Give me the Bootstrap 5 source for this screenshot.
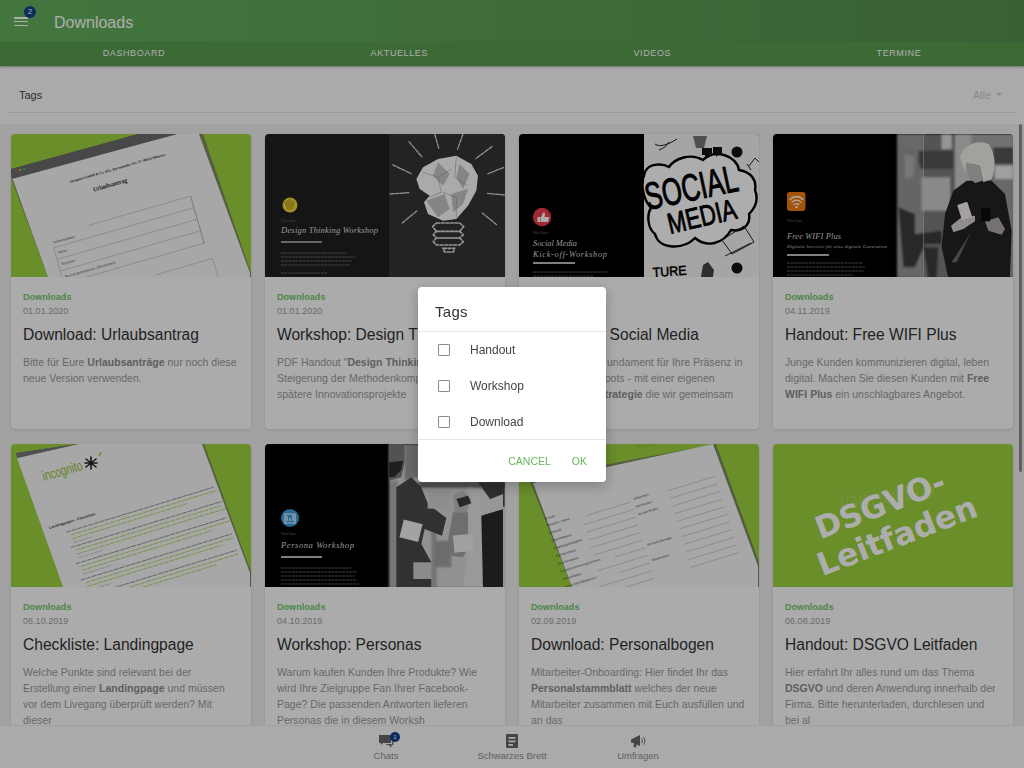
<!DOCTYPE html>
<html lang="de">
<head>
<meta charset="utf-8">
<title>Downloads</title>
<link href="https://cdn.jsdelivr.net/npm/bootstrap@5.3.0/dist/css/bootstrap.min.css" rel="stylesheet">
<style>
html,body{height:100%;overflow:hidden}
body{font-family:"Liberation Sans",Arial,sans-serif;background:#efefef;color:#333}
.app-shell{height:768px}
.top-head{background:linear-gradient(90deg,#63b05c,#568f4e);height:42px;padding:0 0 0 14px}
.head-title{font-size:16px;color:#fff;margin-left:18px;line-height:45px}
.menu-btn{width:22px;height:42px;position:relative;padding-top:17px}
.menu-btn i{display:block;height:1.5px;width:14px;background:#fff;margin-bottom:2.4px}
.menu-count{position:absolute;left:10px;top:6px;width:12px;height:12px;border-radius:50%;background:#12408d;color:#fff;font-size:8px;line-height:12px;padding:0;font-weight:400}
.tab-strip{background:#579c4f;height:24px;box-shadow:0 1px 2px rgba(0,0,0,.35);position:relative;z-index:2}
.tab-strip .nav-link{color:#fff;font-size:9px;letter-spacing:.6px;text-transform:uppercase;line-height:22px;padding:0;height:24px}
.filter-strip{height:58px;background:#fbfbfb;padding:0 8px}
.filter-inner{height:47px;border-bottom:1px solid #e2e2e2;padding:12px 11px 0;font-size:11px}
.filter-name{color:#444}
.filter-all{color:#cbcbcb;padding:0 3px 0 0;font-size:11px;border:0;background:none;--bs-btn-color:#cbcbcb}
.filter-all.dropdown-toggle::after{margin-left:5px;vertical-align:3px;border-top-width:3.5px;border-left-width:3.5px;border-right-width:3.5px}
.card-scroll{flex:1 1 auto;min-height:0;overflow:hidden;padding:10px 11px 0;display:grid;grid-template-columns:repeat(4,240px);column-gap:14px;row-gap:15px;grid-auto-rows:295px}
.doc-card{border:0;border-radius:4px;overflow:hidden;background:#fcfcfc;box-shadow:0 1px 3px rgba(0,0,0,.12);height:295px}
.doc-card svg{display:block;width:240px;height:143px;flex:none}
.doc-body{padding:14px 12px 0}
.doc-cat{font-size:9px;line-height:12px;font-weight:700;color:#70c769;letter-spacing:.05px}
.doc-date{font-size:9px;line-height:12px;margin-top:2px;color:#9c9c9c;letter-spacing:.03px}
.doc-title{font-size:15.6px;line-height:20px;margin:8px 0 9px;color:#333;font-weight:400;white-space:nowrap}
.doc-text{font-size:10.5px;line-height:16px;color:#999;margin:0;letter-spacing:.01px}
.doc-text b{font-weight:700;color:#8c8c8c}
.bottom-bar{height:43px;background:#fbfbfb;border-top:1px solid #ececec;position:relative;z-index:2}
.bottom-item{width:126px;color:#8e8e8e;font-size:9.5px;line-height:11px;position:relative;padding-top:8px;text-align:center}
.bottom-item svg{display:block;margin:0 auto 2px;width:16px;height:14px}
.chat-count{position:absolute;left:67px;top:6px;width:10px;height:10px;border-radius:50%;background:#12408d;color:#fff;font-size:6px;line-height:10px;padding:0;font-weight:400}
.side-thumb{position:absolute;right:2px;top:124px;width:3px;height:348px;background:#8d8d8d;border-radius:2px;z-index:3}
.modal-backdrop{--bs-backdrop-opacity:.32}
.tags-dialog{--bs-modal-width:188px;max-width:188px;margin:0 auto;min-height:768px}
.tags-dialog .modal-content{border:0;border-radius:4px;box-shadow:0 4px 14px rgba(0,0,0,.25);height:195px}
.tags-dialog .modal-header{height:45px;padding:7px 17px 0;border-bottom:1px solid #e6e6e6;border-radius:0}
.tags-dialog .modal-title{font-size:15px;font-weight:400;color:#333;letter-spacing:.02em}
.tags-dialog .modal-body{padding:0;height:107px;flex:none}
.tag-row{height:36px;padding-left:20px;margin:0;font-size:12px;color:#444;gap:20px}
.tags-dialog .tag-row .form-check-input{width:12px;height:12px;margin:0;border:1.5px solid #8a8a8a;border-radius:1px;float:none;flex:none}
.tags-dialog .modal-footer{height:43px;padding:2px 19px 0 0;border-top:1px solid #e6e6e6;gap:21px;flex-wrap:nowrap;border-radius:0}
.tags-dialog .modal-footer>*{margin:0}
.tag-action{font-size:10.5px;color:#63b95d;padding:0;border:0;background:none;--bs-btn-color:#63b95d}
.ser{font-family:"Liberation Serif",serif}
</style>
</head>
<body>
<div class="app-shell d-flex flex-column">
  <header class="flex-shrink-0">
    <div class="top-head d-flex align-items-start">
      <div class="menu-btn"><i></i><i></i><i></i><span class="badge menu-count">2</span></div>
      <div class="head-title">Downloads</div>
    </div>
    <nav class="nav nav-fill tab-strip">
      <a class="nav-link" href="#">Dashboard</a>
      <a class="nav-link" href="#">Aktuelles</a>
      <a class="nav-link" href="#">Videos</a>
      <a class="nav-link" href="#">Termine</a>
    </nav>
  </header>

  <div class="filter-strip flex-shrink-0">
    <div class="filter-inner d-flex justify-content-between align-items-center">
      <span class="filter-name">Tags</span>
      <button class="btn filter-all dropdown-toggle" type="button">Alle</button>
    </div>
  </div>

  <main class="card-scroll">
    <!-- 1 -->
    <article class="card doc-card">
      <svg viewBox="0 0 240 143" class="ser">
        <defs>
          <filter id="soft" x="-5%" y="-5%" width="110%" height="110%"><feGaussianBlur stdDeviation="2"/></filter>
          <filter id="softer" x="-5%" y="-5%" width="110%" height="110%"><feGaussianBlur stdDeviation="3"/></filter>
        </defs>
        <rect width="240" height="143" fill="#9cd13f"/>
        <polygon points="0,35 127,0 192,0 240,139 240,143 37,143 0,44" fill="#7d8c60"/>
        <polygon points="0,44 166,0 188,0 239,139 239,143 37,143 2,46" fill="#f6f6f6"/>
        <polygon points="0,35 127,0 166,0 1,45" fill="#6a6a6a"/>
        <circle cx="5" cy="37" r="1" fill="#e55"/><circle cx="9" cy="36" r="1" fill="#ec3"/><circle cx="13" cy="35" r="1" fill="#5c5"/>
        <g transform="rotate(-16 100 60)">
          <text x="64" y="38" font-size="3.6" font-weight="700" fill="#222">incognito GmbH &amp; Co. KG, Dortmunder Str. 27, 48155 Münster</text>
          <text x="84" y="53" font-size="6.500" font-weight="700" fill="#222" textLength="35" lengthAdjust="spacingAndGlyphs">Urlaubsantrag</text>
          <text x="31" y="92" font-size="4" fill="#444">Arbeitnehmer:</text>
          <text x="33" y="103" font-size="3.800" fill="#444">Name:</text>
          <text x="33" y="115" font-size="3.800" fill="#444">Vorname:</text>
          <text x="33" y="128" font-size="3.800" fill="#444">Bereits genommener Jahresurlaub:</text>
          <g fill="none" stroke="#999" stroke-width=".4">
            <path d="M30 96H176M30 108H176M30 120H176M30 133H176M70 84H176V133M30 96V145M176 84V133M120 150H180V175H120"/>
          </g>
        </g>
      </svg>
      <div class="doc-body">
        <div class="doc-cat">Downloads</div><div class="doc-date">01.01.2020</div>
        <h5 class="doc-title">Download: Urlaubsantrag</h5>
        <p class="doc-text">Bitte für Eure <b>Urlaubsanträge</b> nur noch diese neue Version verwenden.</p>
      </div>
    </article>
    <!-- 2 -->
    <article class="card doc-card">
      <svg viewBox="0 0 240 143" class="ser">
        <rect width="240" height="143" fill="#1f1f21"/>
        <rect x="124" width="116" height="143" fill="#343434"/>
        <circle cx="25" cy="71" r="7.500" fill="#ecd53c"/><path d="M19 68l6-3 5 3-2 7-6 1z" fill="#c9ae25"/>
        <text x="16" y="88" font-size="3" font-style="italic" fill="#666">White Paper</text>
        <text x="16" y="99" font-size="8.600" font-style="italic" fill="#ddd" textLength="97">Design Thinking Workshop</text>
        <rect x="16" y="107" width="41" height="2" fill="#999"/>
        <path d="M16 119H82M16 123H90M16 127H87M16 131H85M16 139H62" stroke="#888" stroke-width=".7" stroke-dasharray="3 .6" fill="none"/>
        <g transform="translate(123 0) scale(.3333)">
          <g stroke="#d4d4d4" stroke-width="4" stroke-dasharray="14 1">
            <path d="M62 22L103 70M140 0L153 45M225 0L208 47M313 37L262 75M348 100L298 120M13 92L72 120M5 180L65 176M350 183L297 178M42 268L87 230M327 273L282 236"/>
          </g>
          <path d="M85 135L105 100 150 75 205 65 250 90 270 125 265 170 240 215 205 255 165 260 120 240 108 205 125 185 95 165Z" fill="#fbfbfb"/>
          <g fill="#c4c4c4" filter="url(#soft)">
            <path d="M150 85L185 120 165 155 135 125ZM215 90L245 120 225 165 205 130ZM115 200L170 180 185 225 150 250ZM190 180L240 165 225 210 195 235Z"/>
          </g>
          <g fill="none" stroke="#8a8a8a" stroke-width="1.500"><path d="M105 115L150 130 190 105M150 130L160 175 125 190M205 70L200 130 240 155M165 175L205 190 205 250"/></g>
          <g fill="none" stroke="#ddd" stroke-width="5" stroke-dasharray="12 1.500">
            <path d="M145 267H215L227 278 215 292H145L134 278ZM145 292H215L226 302 215 312H145L136 302ZM145 312H215L226 323 215 333H145L136 323ZM165 343H200L196 354H170Z"/>
          </g>
        </g>
      </svg>
      <div class="doc-body">
        <div class="doc-cat">Downloads</div><div class="doc-date">01.01.2020</div>
        <h5 class="doc-title">Workshop: Design Thinking</h5>
        <p class="doc-text">PDF Handout "<b>Design Thinking</b>" - Steigerung der Methodenkompetenz für spätere Innovationsprojekte</p>
      </div>
    </article>
    <!-- 3 -->
    <article class="card doc-card">
      <svg viewBox="0 0 240 143" class="ser">
        <rect width="240" height="143" fill="#000"/>
        <rect x="125" width="115" height="143" fill="#f3f3f3"/>
        <path d="M126 38C130 28 145 30 150 33 156 24 172 19 184 26 196 14 218 22 220 36 232 38 238 46 236 56 240 66 236 74 230 80 232 92 222 98 212 96 204 110 188 114 176 104 164 116 140 116 136 100 128 94 128 80 132 74 122 62 122 48 126 38Z" fill="#fff" stroke="#000" stroke-width="2.400"/>
        <g font-family="'Liberation Sans',sans-serif" fill="#000" stroke="#000">
          <text transform="translate(129 76) rotate(-12)" font-size="38" stroke-width="1" textLength="94" lengthAdjust="spacingAndGlyphs">SOCIAL</text>
          <text transform="translate(151 100) rotate(-13)" font-size="29" stroke-width=".9" textLength="70" lengthAdjust="spacingAndGlyphs">MEDIA</text>
          <text transform="translate(134 143) rotate(-4)" font-size="13" stroke-width=".5" textLength="34" lengthAdjust="spacingAndGlyphs">TURE</text>
        </g>
        <g fill="#111">
          <circle cx="218" cy="134" r="5.500"/><circle cx="218" cy="18" r="5.500"/>
          <path d="M183 14h10v7h-4l-3 4v-4h-3zM194 13h9v7h-3l-3 3v-3h-3z"/>
          <path d="M182 143l2-12 5-3 6 8-1 7z" fill="#444"/>
          <path d="M174 2h14l-3 12h-8z" fill="#777"/>
        </g>
        <g fill="none" stroke="#222" stroke-width="1"><path d="M203 106l22-14 10 16-22 12zM206 122l26-13M136 10c5 4 14 0 22-5M140 16c5-2 8-4 10-8M230 32l6-8 4 4M228 30l4 6"/></g>
        <circle cx="23" cy="83" r="9.200" fill="#ec3c4c"/>
        <path d="M18.500 83h3v5h-3zM22 83l2-4c1-1 2 0 2 1l-.5 3H29c1 0 1 1 1 1l-1 4H22z" fill="#fff"/>
        <text x="14" y="100" font-size="3" font-style="italic" fill="#777">White Paper</text>
        <text x="14" y="112" font-size="8.300" font-style="italic" fill="#ddd">Social Media</text>
        <text x="14" y="123" font-size="8.300" font-style="italic" fill="#ddd" textLength="74">Kick-off-Workshop</text>
        <rect x="14" y="128" width="42" height="2" fill="#bbb"/>
        <path d="M14 138H88M14 142H74" stroke="#888" stroke-width=".7" stroke-dasharray="3 .6"/>
      </svg>
      <div class="doc-body">
        <div class="doc-cat">Downloads</div><div class="doc-date">01.01.2020</div>
        <h5 class="doc-title">Workshop: Social Media</h5>
        <p class="doc-text">Social Media - Fundament für Ihre Präsenz in Zeiten von Hotspots - mit einer eigenen <b>Social Media Strategie</b> die wir gemeinsam</p>
      </div>
    </article>
    <!-- 4 -->
    <article class="card doc-card">
      <svg viewBox="0 0 240 143" class="ser">
        <rect width="240" height="143" fill="#000"/>
        <g transform="translate(122 0) scale(.3333)">
          <g filter="url(#softer)">
            <rect x="6" width="360" height="432" fill="#9a9a9a"/>
            <rect x="85" width="95" height="432" fill="#7c7c7c"/>
            <rect x="70" y="50" width="105" height="55" fill="#555"/>
            <rect x="80" y="130" width="85" height="100" fill="#cbcbcb"/>
            <rect x="140" width="30" height="45" fill="#dedede"/>
            <rect x="180" width="50" height="210" fill="#cdcdcd"/>
            <rect x="230" width="125" height="40" fill="#a9a9a9"/>
            <rect x="295" y="40" width="60" height="50" fill="#555"/>
            <rect x="300" y="95" width="55" height="40" fill="#eaeaea"/>
            <path d="M10 20L60 50 75 100 70 432H10Z" fill="#959595"/>
            <path d="M10 220L60 240 60 300 140 290 140 330 90 330 60 400 25 400Z" fill="#3a3a3a"/>
            <path d="M85 340L130 340 125 432H100Z" fill="#3c3c3c"/>
            <path d="M30 60L60 70 55 130 30 135Z" fill="#b0b0b0"/>
          </g>
          <rect x="84" width="1.500" height="432" fill="#d0d0d0"/>
          <g filter="url(#soft)">
            <path d="M150 240L175 170 215 140 290 140 330 180 350 290 345 432H160L140 340Z" fill="#232323"/>
            <path d="M170 385L225 300 240 270 216 320 185 385Z" fill="#6a6a6a"/>
            <path d="M195 70C205 35 245 15 280 30 300 55 305 100 290 135L265 145 255 95 215 85 210 115Z" fill="#efefe6"/>
            <path d="M212 88L255 95 262 140 240 147 220 130Z" fill="#bdbdbd"/>
            <path d="M168 275L200 250 240 245 240 262 205 285 175 295Z" fill="#d4d0d0"/>
            <rect x="193" y="207" width="32" height="48" rx="3" transform="rotate(-18 209 231)" fill="#f5ecec"/>
            <path d="M270 262L310 250 330 285 320 302 280 290Z" fill="#b0a8a8"/>
            <rect x="258" y="222" width="28" height="40" fill="#111"/>
          </g>
        </g>
        <rect x="14" y="58" width="18.500" height="19" rx="3" fill="#f47a10"/>
        <g fill="none" stroke="#fff" stroke-width="1.300" stroke-linecap="round"><path d="M17 65.500c4-4 9-4 13 0M19 68c3-2.500 6-2.500 9 0M21 70.500c1.600-1.200 3.400-1.200 5 0"/></g><circle cx="23.500" cy="73" r="1.200" fill="#fff"/>
        <text x="14" y="88" font-size="3" font-style="italic" fill="#777">White Paper</text>
        <text x="14" y="105" font-size="8.300" font-style="italic" fill="#ddd" textLength="54">Free WIFI Plus</text>
        <text x="14" y="114" font-size="4.800" font-style="italic" fill="#ccc" textLength="100">Digitale Services für eine digitale Generation</text>
        <rect x="14" y="120" width="42" height="2" fill="#bbb"/>
        <path d="M14 129H90M14 133H92M14 137H91M14 141H80" stroke="#888" stroke-width=".7" stroke-dasharray="3 .6"/>
      </svg>
      <div class="doc-body">
        <div class="doc-cat">Downloads</div><div class="doc-date">04.11.2019</div>
        <h5 class="doc-title">Handout: Free WIFI Plus</h5>
        <p class="doc-text">Junge Kunden kommunizieren digital, leben digital. Machen Sie diesen Kunden mit <b>Free WIFI Plus</b> ein unschlagbares Angebot.</p>
      </div>
    </article>
    <!-- 5 -->
    <article class="card doc-card">
      <svg viewBox="0 0 240 143">
        <rect width="240" height="143" fill="#9cd13f"/>
        <polygon points="5,9 66,0 193,0 240,128 240,143 52,143" fill="#7b8a5e"/>
        <polygon points="6,14 68,0 191,0 239,129 239,143 52,143" fill="#f6f6f6"/>
        <polygon points="5,9 66,0 6,14" fill="#777"/>
        <text transform="translate(33 37) rotate(-16)" font-size="14" fill="#8ec234" textLength="41" lengthAdjust="spacingAndGlyphs">incognito</text>
        <g stroke="#222" stroke-width="1.600" stroke-linecap="round"><path d="M80 13v12M75 15l10 8M75 23l10-8M74 19h12"/></g>
        <path d="M88 12l2-4" stroke="#9cd13f" stroke-width="1.500"/>
        <g transform="rotate(-17 130 80)">
          <text x="41" y="58" font-size="3.800" font-weight="700" fill="#444">Landingpages - Checkliste</text>
          <g fill="none" stroke-width=".7" stroke-dasharray="5 .8">
            <path stroke="#777" d="M56 66H210M56 82H214M56 99H214M56 116H214M56 133H214"/>
            <path stroke="#9cd13f" d="M60 70H212M60 74H180M60 86H212M60 90H216M60 103H216M60 107H196M60 120H214M60 124H202M60 137H214M60 141H190"/>
            <path stroke="#bbb" d="M60 78H80M60 94H86M60 111H90M60 128H84"/>
          </g>
        </g>
      </svg>
      <div class="doc-body">
        <div class="doc-cat">Downloads</div><div class="doc-date">08.10.2019</div>
        <h5 class="doc-title">Checkliste: Landingpage</h5>
        <p class="doc-text">Welche Punkte sind relevant bei der Erstellung einer <b>Landingpage</b> und müssen vor dem Livegang überprüft werden? Mit dieser</p>
      </div>
    </article>
    <!-- 6 -->
    <article class="card doc-card">
      <svg viewBox="0 0 240 143" class="ser">
        <rect width="240" height="143" fill="#000"/>
        <g transform="translate(123 0) scale(.3333)">
          <g filter="url(#softer)">
            <rect x="3" width="360" height="432" fill="#d6d6d6"/>
            <rect x="92" y="112" width="270" height="20" fill="#757575"/>
            <rect x="130" y="260" width="16" height="172" fill="#aaa"/>
            <rect x="140" y="290" width="50" height="80" fill="#a0a0a0"/>
            <path d="M50 0H92V100L50 110Z" fill="#999"/>
            <path d="M3 110H30V432H3Z" fill="#b0b0b0"/>
            <path d="M240 130L345 150 345 432H225L240 300Z" fill="#e2e2e2"/>
          </g>
          <g filter="url(#soft)">
            <path d="M3 0H50V55L40 100 3 110Z" fill="#7a7a7a"/>
            <path d="M3 55L45 50 40 78 20 98 3 100Z" fill="#2f2f2f"/>
            <path d="M25 130L70 100 100 130 120 180 175 222 162 275 110 255 100 300 130 355 130 432H25Z" fill="#4a4a4a"/>
            <path d="M180 290L195 205 240 205 240 310 225 340 190 335Z" fill="#a2a2a2"/>
            <path d="M195 155L225 140 250 165 235 205 200 205Z" fill="#bdbdbd"/>
            <path d="M205 165L240 155 250 178 215 190Z" fill="#3a3a3a"/>
            <path d="M270 115H350V190L310 170Z" fill="#444"/>
            <path d="M280 215L345 195V432H285Z" fill="#2c2c2c"/>
            <path d="M270 180L345 150V195L290 210Z" fill="#dedede"/>
            <rect x="120" y="135" width="65" height="60" transform="rotate(3 152 165)" fill="#d0d0d0"/>
            <rect x="40" y="233" width="58" height="55" transform="rotate(14 69 260)" fill="#f0f0f0"/>
            <rect x="76" y="355" width="55" height="50" fill="#cdcdcd"/>
            <rect x="197" y="272" width="58" height="52" transform="rotate(-5 226 298)" fill="#ececec"/>
          </g>
        </g>
        <circle cx="25" cy="74" r="9" fill="#3b9be0"/>
        <path d="M20 70h10v9H20zM22 72v5M25 74v3M28 71v6" fill="none" stroke="#fff" stroke-width="1.200"/>
        <text x="16" y="91" font-size="3" font-style="italic" fill="#777">White Paper</text>
        <text x="16" y="104" font-size="8.600" font-style="italic" fill="#ddd" textLength="73">Persona Workshop</text>
        <rect x="16" y="112" width="41" height="2" fill="#bbb"/>
        <path d="M16 124H86M16 128H92M16 132H90M16 136H92M16 140H94" stroke="#888" stroke-width=".7" stroke-dasharray="3 .6"/>
      </svg>
      <div class="doc-body">
        <div class="doc-cat">Downloads</div><div class="doc-date">04.10.2019</div>
        <h5 class="doc-title">Workshop: Personas</h5>
        <p class="doc-text">Warum kaufen Kunden Ihre Produkte? Wie wird Ihre Zielgruppe Fan Ihrer Facebook-Page? Die passenden Antworten lieferen Personas die in diesem Worksh</p>
      </div>
    </article>
    <!-- 7 -->
    <article class="card doc-card">
      <svg viewBox="0 0 240 143">
        <rect width="240" height="143" fill="#9cd13f"/>
        <polygon points="197,0 240,118 240,143 53,143 10,35" fill="#7b8a5e"/>
        <polygon points="194,0 239,122 239,143 53,143 14,39" fill="#f6f6f6"/>
        <text transform="translate(119 6) rotate(-16)" font-size="11" fill="#8ec234">inco</text>
        <g transform="rotate(-17 120 90)">
          <g font-size="3.300" fill="#444">
            <text x="34" y="49">Anrede:</text><text x="34" y="56">Vorname, Name:</text><text x="34" y="64">Anschrift:</text><text x="34" y="72">Geburtsdatum:</text><text x="34" y="80">Staatsangehörigkeit:</text><text x="34" y="88">Familienstand:</text><text x="34" y="96">Krankenkasse:</text><text x="34" y="104">Sozialversicherungsnummer:</text><text x="34" y="112">Steuerklasse:</text><text x="34" y="120">Steueridentifikationsnr.:</text><text x="34" y="128">Bank:</text><text x="34" y="136">Kontonummer:</text>
            <text x="125" y="56">Geburtsort:</text><text x="125" y="64">Konfession:</text><text x="125" y="72">Anzahl Kinder:</text><text x="125" y="104">Kinderfreibeträge:</text><text x="125" y="120">Bankinstitut:</text>
          </g>
          <path d="M76 57h45M70 65h52M70 73h52M70 81h52M70 89h52M70 97h52M90 105h32M70 113h52M90 121h32M60 129h62M70 137h52M160 57h50M160 65h50M160 73h50M160 81h50M160 89h50M160 97h50M160 105h50M160 113h50M160 121h50M160 129h50M160 137h50" stroke="#999" stroke-width=".4" fill="none"/>
        </g>
      </svg>
      <div class="doc-body">
        <div class="doc-cat">Downloads</div><div class="doc-date">02.09.2019</div>
        <h5 class="doc-title">Download: Personalbogen</h5>
        <p class="doc-text">Mitarbeiter-Onboarding: Hier findet Ihr das <b>Personalstammblatt</b> welches der neue Mitarbeiter zusammen mit Euch ausfüllen und an das</p>
      </div>
    </article>
    <!-- 8 -->
    <article class="card doc-card">
      <svg viewBox="0 0 240 143">
        <rect width="240" height="143" fill="#9cd13f"/>
        <text transform="translate(115 60) rotate(-8)" font-size="24" fill="#a9d757" text-anchor="middle">incognito</text>
        <g font-family="'DejaVu Sans',sans-serif" font-weight="700" fill="#fff" text-anchor="middle">
          <text transform="translate(111 71) rotate(-21)" font-size="31">DSGVO-</text>
          <text transform="translate(128 102) rotate(-21)" font-size="31.500">Leitfaden</text>
        </g>
      </svg>
      <div class="doc-body">
        <div class="doc-cat">Downloads</div><div class="doc-date">06.08.2019</div>
        <h5 class="doc-title">Handout: DSGVO Leitfaden</h5>
        <p class="doc-text">Hier erfahrt Ihr alles rund um das Thema <b>DSGVO</b> und deren Anwendung innerhalb der Firma. Bitte herunterladen, durchlesen und bei al</p>
      </div>
    </article>
  </main>

  <footer class="bottom-bar d-flex justify-content-center flex-shrink-0">
    <a class="bottom-item text-decoration-none">
      <svg viewBox="0 0 16 14"><path d="M1 1h12v8H5l-2 2V9H1z" fill="#666"/><path d="M8 10h6V5h1.500v6H14l-1 2.500-2.500-2.500H8z" fill="#777"/></svg>
      Chats<span class="badge chat-count">1</span>
    </a>
    <a class="bottom-item text-decoration-none">
      <svg viewBox="0 0 16 14"><path fill-rule="evenodd" d="M3 0h10a1 1 0 0 1 1 1v12a1 1 0 0 1-1 1H3a1 1 0 0 1-1-1V1a1 1 0 0 1 1-1zm1.500 3v1.800h7V3zm0 3.500v1.800h7V6.500zm0 3.500v1.800h4.500V10z" fill="#666"/></svg>
      Schwarzes Brett
    </a>
    <a class="bottom-item text-decoration-none">
      <svg viewBox="0 0 16 14"><path d="M1 5.500L10 1v11L6.500 10.500 6 13.500 3.500 13l.5-3.800L1 8.500z" fill="#666"/><path d="M11.500 4.500c1.200 1.200 1.200 3.300 0 4.500M13.300 3c2 2 2 5.500 0 7.500" fill="none" stroke="#666" stroke-width="1"/></svg>
      Umfragen
    </a>
  </footer>
</div>
<div class="side-thumb"></div>

<div class="modal-backdrop show"></div>
<div class="modal d-block" tabindex="-1">
  <div class="modal-dialog modal-dialog-centered tags-dialog">
    <div class="modal-content">
      <div class="modal-header"><h5 class="modal-title">Tags</h5></div>
      <div class="modal-body">
        <label class="form-check tag-row d-flex align-items-center"><input class="form-check-input" type="checkbox">Handout</label>
        <label class="form-check tag-row d-flex align-items-center"><input class="form-check-input" type="checkbox">Workshop</label>
        <label class="form-check tag-row d-flex align-items-center"><input class="form-check-input" type="checkbox">Download</label>
      </div>
      <div class="modal-footer justify-content-end">
        <button class="btn tag-action" type="button">CANCEL</button>
        <button class="btn tag-action" type="button">OK</button>
      </div>
    </div>
  </div>
</div>
<script src="https://cdn.jsdelivr.net/npm/bootstrap@5.3.0/dist/js/bootstrap.bundle.min.js"></script>
</body>
</html>
